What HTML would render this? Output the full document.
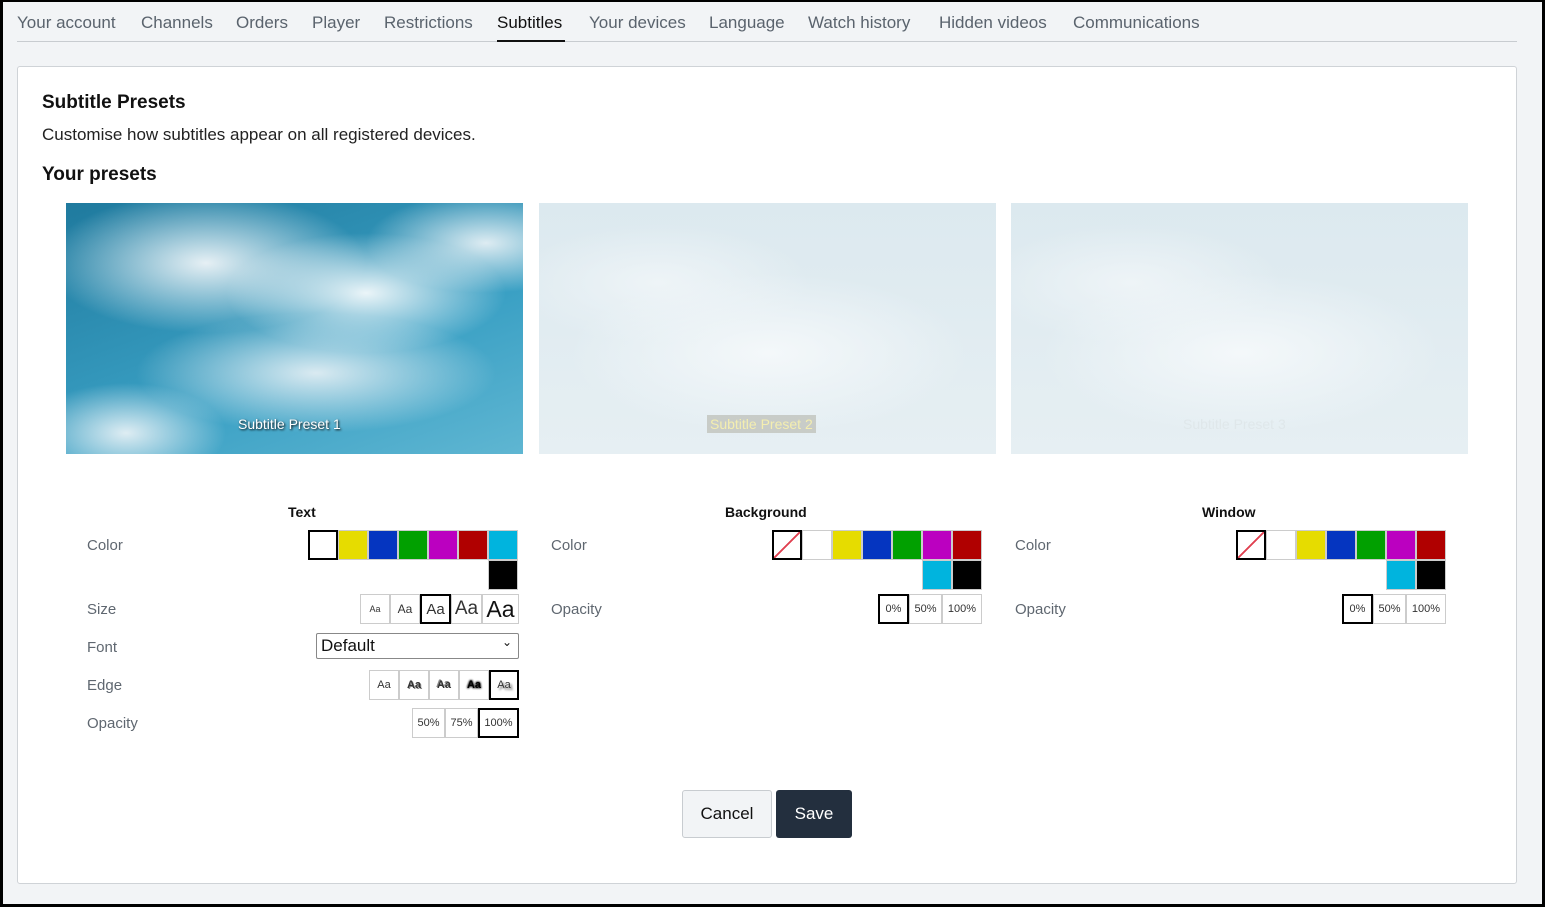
<!DOCTYPE html>
<html><head><meta charset="utf-8"><style>
*{box-sizing:border-box;margin:0;padding:0}
html,body{width:1545px;height:907px;overflow:hidden}
body{background:#000;font-family:"Liberation Sans",sans-serif;position:relative}
#pg{position:absolute;left:3px;top:2px;width:1539px;height:902px;background:#f2f4f6}
.a{position:absolute}
.nav{font-size:17px;color:#5a636d;top:13px;white-space:nowrap}
.card{left:17px;top:66px;width:1500px;height:818px;background:#fff;border:1px solid #cfd3d7;border-radius:3px}
.lbl{font-size:15px;color:#5f6770;margin-top:1px}
.hd{font-size:14px;font-weight:bold;color:#111;margin-top:1px}
.sw{width:30px;height:30px;border:1px solid #ccc}
.sel{border:2px solid #000!important}
.bt{height:30px;border:1px solid #ccc;background:#fff;font-size:11px;color:#333;display:flex;align-items:center;justify-content:center}
.img{top:203px;height:251px;width:457px}
.sub{font-size:14px;top:416px;white-space:nowrap}
.none{background:linear-gradient(to bottom right,#fff 47%,#e04050 48%,#e04050 52%,#fff 53%)}
</style></head><body><div id="pg"></div>
<div class="a nav" style="left:17px">Your account</div>
<div class="a nav" style="left:141px">Channels</div>
<div class="a nav" style="left:236px">Orders</div>
<div class="a nav" style="left:312px">Player</div>
<div class="a nav" style="left:384px">Restrictions</div>
<div class="a nav" style="left:497px;color:#111">Subtitles</div>
<div class="a nav" style="left:589px">Your devices</div>
<div class="a nav" style="left:709px">Language</div>
<div class="a nav" style="left:808px">Watch history</div>
<div class="a nav" style="left:939px">Hidden videos</div>
<div class="a nav" style="left:1073px">Communications</div>
<div class="a" style="left:17px;top:41px;width:1500px;height:1px;background:#c8ccd0"></div>
<div class="a" style="left:497px;top:40px;width:68px;height:2px;background:#111"></div>
<div class="a card"></div>
<div class="a" style="left:42px;top:92px;font-size:19px;font-weight:bold;color:#111">Subtitle Presets</div>
<div class="a" style="left:42px;top:125px;font-size:17px;color:#222">Customise how subtitles appear on all registered devices.</div>
<div class="a" style="left:42px;top:164px;font-size:19px;font-weight:bold;color:#111">Your presets</div>

<div class="a img" style="left:66px;background:radial-gradient(ellipse 140px 60px at 300px 90px,rgba(255,255,255,.9),transparent),radial-gradient(ellipse 160px 70px at 140px 60px,rgba(240,245,248,.95),transparent),radial-gradient(ellipse 180px 60px at 250px 170px,rgba(235,242,246,.9),transparent),radial-gradient(ellipse 120px 50px at 420px 40px,rgba(240,245,248,.9),transparent),radial-gradient(ellipse 100px 50px at 60px 230px,rgba(240,245,248,.9),transparent),linear-gradient(160deg,#1f7a9e,#3aa0c4 60%,#5fb6d2)"></div>
<div class="a sub" style="left:238px;color:#fff;text-shadow:1px 1px 2px #000">Subtitle Preset 1</div>
<div class="a img" style="left:539px;background:radial-gradient(ellipse 200px 80px at 230px 150px,#f4f8fa,transparent),radial-gradient(ellipse 150px 60px at 120px 80px,#eef4f7,transparent),linear-gradient(#dce9ef,#e6eff3)"></div>
<div class="a sub" style="left:707px;top:415px;color:#f4eeb0;background:rgba(180,180,170,.6);padding:1px 3px">Subtitle Preset 2</div>
<div class="a img" style="left:1011px;background:radial-gradient(ellipse 200px 80px at 230px 150px,#f4f8fa,transparent),radial-gradient(ellipse 150px 60px at 120px 80px,#eef4f7,transparent),linear-gradient(#dce9ef,#e6eff3)"></div>
<div class="a sub" style="left:1183px;color:#dfe7ea">Subtitle Preset 3</div>

<div class="a hd" style="left:288px;top:503px">Text</div>
<div class="a hd" style="left:725px;top:503px">Background</div>
<div class="a hd" style="left:1202px;top:503px">Window</div>
<div class="a lbl" style="left:87px;top:536px">Color</div>
<div class="a lbl" style="left:87px;top:600px">Size</div>
<div class="a lbl" style="left:87px;top:638px">Font</div>
<div class="a lbl" style="left:87px;top:676px">Edge</div>
<div class="a lbl" style="left:87px;top:714px">Opacity</div>
<div class="a lbl" style="left:551px;top:536px">Color</div>
<div class="a lbl" style="left:551px;top:600px">Opacity</div>
<div class="a lbl" style="left:1015px;top:536px">Color</div>
<div class="a lbl" style="left:1015px;top:600px">Opacity</div>

<div class="a sw sel" style="left:308px;top:530px;background:#fff"></div>
<div class="a sw" style="left:338px;top:530px;background:#e6dc00"></div>
<div class="a sw" style="left:368px;top:530px;background:#0535c0"></div>
<div class="a sw" style="left:398px;top:530px;background:#01a000"></div>
<div class="a sw" style="left:428px;top:530px;background:#bb00c0"></div>
<div class="a sw" style="left:458px;top:530px;background:#b00000"></div>
<div class="a sw" style="left:488px;top:530px;background:#00b4de"></div>
<div class="a sw" style="left:488px;top:560px;background:#000"></div>

<div class="a bt" style="left:360px;top:594px;width:30px;font-size:9px">Aa</div>
<div class="a bt" style="left:390px;top:594px;width:30px;font-size:12px">Aa</div>
<div class="a bt sel" style="left:420px;top:594px;width:31px;font-size:15px">Aa</div>
<div class="a bt" style="left:451px;top:594px;width:31px;font-size:19px">Aa</div>
<div class="a bt" style="left:482px;top:594px;width:37px;font-size:23px;color:#111">Aa</div>

<div class="a" style="left:316px;top:633px;width:203px;height:26px;border:1px solid #888;border-radius:2px;background:#fff;font-size:17px;padding:2px 4px;color:#111">Default<span style="position:absolute;right:6px;top:1px;font-size:12px">&#8964;</span></div>

<div class="a bt" style="left:369px;top:670px;width:30px">Aa</div>
<div class="a bt" style="left:399px;top:670px;width:30px;font-weight:bold;text-shadow:1px 1px 0 #888">Aa</div>
<div class="a bt" style="left:429px;top:670px;width:30px;font-weight:bold;text-shadow:-1px -1px 0 #888">Aa</div>
<div class="a bt" style="left:459px;top:670px;width:30px;font-weight:bold;color:#000;text-shadow:0 0 2px #000,0 0 2px #000">Aa</div>
<div class="a bt sel" style="left:489px;top:670px;width:30px;text-shadow:2px 2px 2px #666">Aa</div>

<div class="a bt" style="left:412px;top:708px;width:33px">50%</div>
<div class="a bt" style="left:445px;top:708px;width:33px">75%</div>
<div class="a bt sel" style="left:478px;top:708px;width:41px">100%</div>

<div class="a sw sel none" style="left:772px;top:530px"></div>
<div class="a sw" style="left:802px;top:530px;background:#fff"></div>
<div class="a sw" style="left:832px;top:530px;background:#e6dc00"></div>
<div class="a sw" style="left:862px;top:530px;background:#0535c0"></div>
<div class="a sw" style="left:892px;top:530px;background:#01a000"></div>
<div class="a sw" style="left:922px;top:530px;background:#bb00c0"></div>
<div class="a sw" style="left:952px;top:530px;background:#b00000"></div>
<div class="a sw" style="left:922px;top:560px;background:#00b4de"></div>
<div class="a sw" style="left:952px;top:560px;background:#000"></div>
<div class="a bt sel" style="left:878px;top:594px;width:31px">0%</div>
<div class="a bt" style="left:909px;top:594px;width:33px">50%</div>
<div class="a bt" style="left:942px;top:594px;width:40px">100%</div>

<div class="a sw sel none" style="left:1236px;top:530px"></div>
<div class="a sw" style="left:1266px;top:530px;background:#fff"></div>
<div class="a sw" style="left:1296px;top:530px;background:#e6dc00"></div>
<div class="a sw" style="left:1326px;top:530px;background:#0535c0"></div>
<div class="a sw" style="left:1356px;top:530px;background:#01a000"></div>
<div class="a sw" style="left:1386px;top:530px;background:#bb00c0"></div>
<div class="a sw" style="left:1416px;top:530px;background:#b00000"></div>
<div class="a sw" style="left:1386px;top:560px;background:#00b4de"></div>
<div class="a sw" style="left:1416px;top:560px;background:#000"></div>
<div class="a bt sel" style="left:1342px;top:594px;width:31px">0%</div>
<div class="a bt" style="left:1373px;top:594px;width:33px">50%</div>
<div class="a bt" style="left:1406px;top:594px;width:40px">100%</div>

<div class="a" style="left:682px;top:790px;width:90px;height:48px;background:#f2f4f6;border:1px solid #c8ccd0;border-radius:3px;font-size:17px;color:#111;display:flex;align-items:center;justify-content:center">Cancel</div>
<div class="a" style="left:776px;top:790px;width:76px;height:48px;background:#232f3e;border-radius:3px;font-size:17px;color:#fff;display:flex;align-items:center;justify-content:center">Save</div>
</body></html>
